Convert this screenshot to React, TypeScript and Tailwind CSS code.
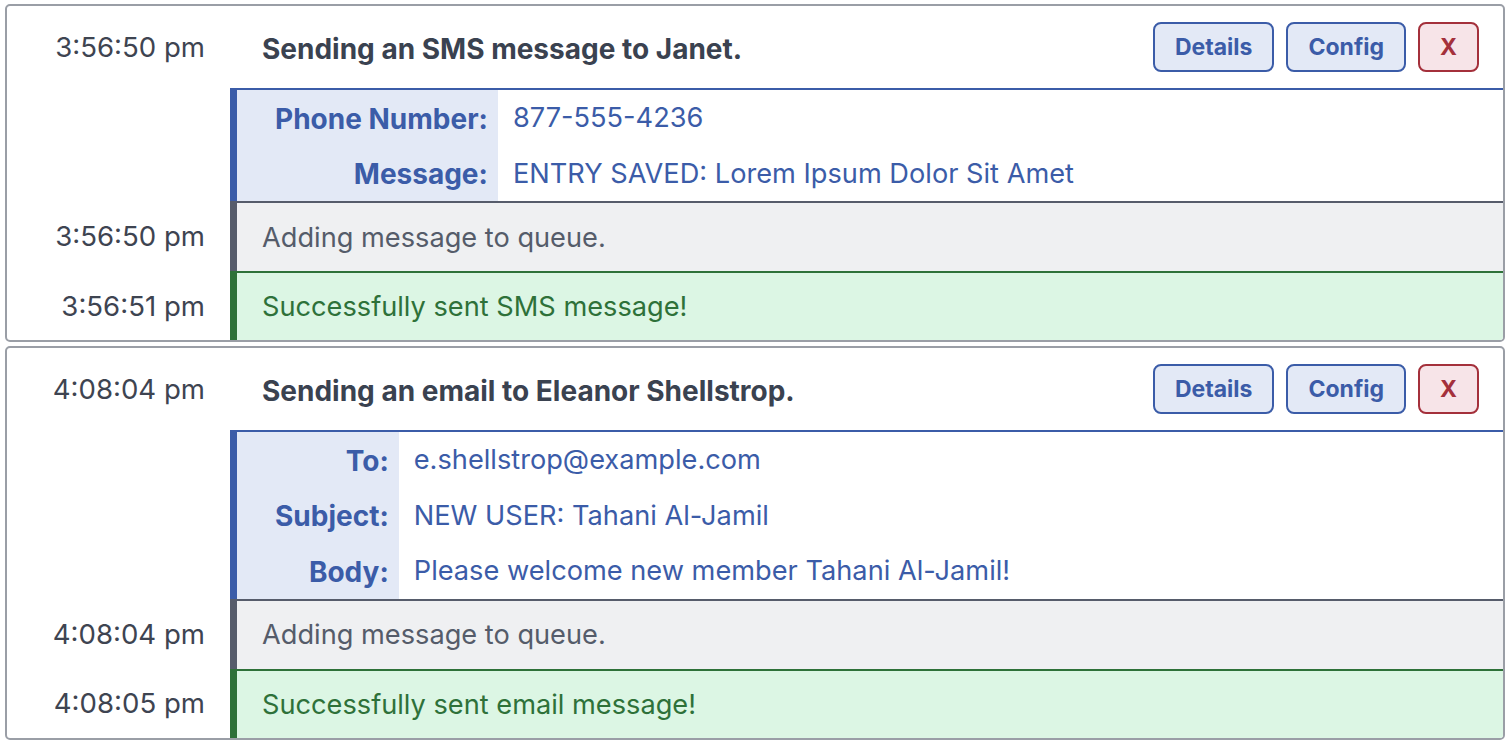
import React from 'react';

type Field = { label: string; value: string };

type Entry = {
  time: string;
  title: string;
  fields: Field[];
  queuedAt: string;
  sentAt: string;
  sentText: string;
};

const ENTRIES: Entry[] = [
  {
    time: '3:56:50 pm',
    title: 'Sending an SMS message to Janet.',
    fields: [
      { label: 'Phone Number:', value: '877-555-4236' },
      { label: 'Message:', value: 'ENTRY SAVED: Lorem Ipsum Dolor Sit Amet' },
    ],
    queuedAt: '3:56:50 pm',
    sentAt: '3:56:51 pm',
    sentText: 'Successfully sent SMS message!',
  },
  {
    time: '4:08:04 pm',
    title: 'Sending an email to Eleanor Shellstrop.',
    fields: [
      { label: 'To:', value: 'e.shellstrop@example.com' },
      { label: 'Subject:', value: 'NEW USER: Tahani Al-Jamil' },
      { label: 'Body:', value: 'Please welcome new member Tahani Al-Jamil!' },
    ],
    queuedAt: '4:08:04 pm',
    sentAt: '4:08:05 pm',
    sentText: 'Successfully sent email message!',
  },
];

function TimeCell({ time }: { time?: string }) {
  return (
    <div className="w-[223px] shrink-0 pr-[25px] pt-[2px] text-right text-[27.6px] text-[#3e4451]">
      {time}
    </div>
  );
}

function LogCard({ entry }: { entry: Entry }) {
  return (
    <div className="flex flex-col border-2 border-[#9a9ea6] rounded-[5px] overflow-hidden bg-white">
      {/* Header */}
      <div className="flex items-center h-[82px]">
        <TimeCell time={entry.time} />
        <div className="flex-1 flex items-center justify-between pl-[32px] pr-[24px]">
          <h2 className="pt-[3px] text-[28px] font-bold text-[#3a4250]">{entry.title}</h2>
          <div className="flex items-center gap-3">
            <button className="h-[50px] px-[20px] pt-[1px] rounded-[8px] border-2 border-[#3b5ca8] bg-[#e3e9f6] text-[#3b5ca8] text-[23px] font-bold">
              Details
            </button>
            <button className="h-[50px] px-[20px] pt-[1px] rounded-[8px] border-2 border-[#3b5ca8] bg-[#e3e9f6] text-[#3b5ca8] text-[23px] font-bold">
              Config
            </button>
            <button className="h-[50px] px-[20px] pt-[1px] rounded-[8px] border-2 border-[#a4303b] bg-[#f7e4e8] text-[#a4303b] text-[23px] font-bold">
              X
            </button>
          </div>
        </div>
      </div>

      {/* Details table */}
      <div className="flex">
        <TimeCell />
        <div className="flex-1 border-l-[7px] border-t-2 border-[#3b5ca8]">
          <table className="border-collapse">
            <tbody>
              {entry.fields.map((f) => (
                <tr key={f.label} className="h-[55.5px]">
                  <td className="bg-[#e3e9f6] pl-[38px] pr-[10px] pt-[2px] text-right text-[28px] font-bold text-[#3b5ca8] whitespace-nowrap">
                    {f.label}
                  </td>
                  <td className="pl-[15px] pt-[2px] text-[27.2px] text-[#3b5ca8] whitespace-nowrap">{f.value}</td>
                </tr>
              ))}
            </tbody>
          </table>
        </div>
      </div>

      {/* Queue row */}
      <div className="flex items-stretch">
        <div className="flex items-center">
          <TimeCell time={entry.queuedAt} />
        </div>
        <div className="flex-1 flex items-center h-[70px] pt-[2px] border-l-[7px] border-t-2 border-[#565c6b] bg-[#eff0f2] pl-[25px] text-[27.2px] text-[#555c6a]">
          Adding message to queue.
        </div>
      </div>

      {/* Sent row */}
      <div className="flex items-stretch">
        <div className="flex items-center">
          <TimeCell time={entry.sentAt} />
        </div>
        <div className="flex-1 flex items-center h-[69px] pt-[2px] border-l-[7px] border-t-2 border-[#2e7139] bg-[#dcf6e4] pl-[25px] text-[27.2px] text-[#2e7139]">
          {entry.sentText}
        </div>
      </div>
    </div>
  );
}

export default function App() {
  return (
    <div
      className="min-h-screen bg-white px-[5px] pt-[4px] flex flex-col gap-[4px]"
      style={{ fontFamily: 'Inter, "Noto Sans", sans-serif' }}
    >
      {ENTRIES.map((e) => (
        <LogCard key={e.time} entry={e} />
      ))}
    </div>
  );
}
